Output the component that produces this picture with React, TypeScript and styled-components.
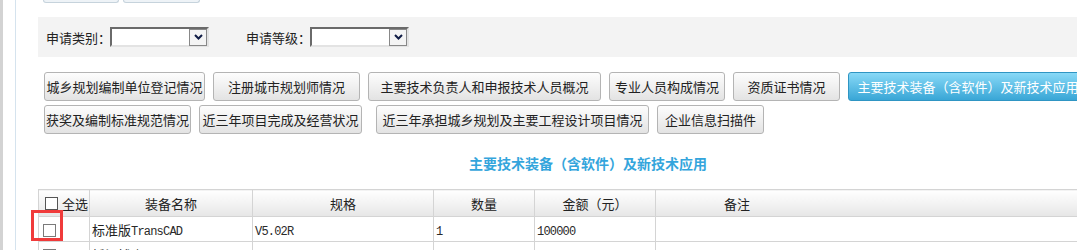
import * as React from "react";
import styled, { createGlobalStyle } from "styled-components";

const GlobalStyle = createGlobalStyle`
  html, body {
    margin: 0;
    padding: 0;
    background: #fff;
    overflow: hidden;
  }
  body {
    font-family: "Noto Sans CJK SC", "Liberation Sans", sans-serif;
    font-size: 13px;
    color: #222;
  }
`;

const Page = styled.div`
  display: flex;
  width: 1140px;
  height: 250px;
`;

const Gutter = styled.div`
  flex: none;
  width: 16px;
  box-sizing: border-box;
  border-left: 3px solid #d3d3d3;
  border-right: 1px solid #d5e3ee;
`;

const Content = styled.main`
  flex: none;
  width: 1100px;
  padding-left: 22px;
`;

const TabRow = styled.div`
  display: flex;
  gap: 4px;
  height: 3px;
  margin-left: 5px;
`;

const TabStub = styled.div<{ $w: number }>`
  width: ${(p) => p.$w}px;
  height: 3px;
  box-sizing: border-box;
  border: 1px solid #c6d3dc;
  border-top: none;
  border-radius: 0 0 3px 3px;
  background: #eef3f7;
`;

const FilterBar = styled.div`
  display: flex;
  align-items: center;
  height: 40px;
  margin-top: 14px;
  padding-left: 8px;
  background: #f3f3f3;
`;

const Field = styled.div`
  display: flex;
  align-items: center;
  & + & {
    margin-left: 37px;
  }
`;

const Label = styled.span`
  width: 64px;
  font-size: 13px;
  white-space: nowrap;
`;

const SelectBox = styled.div`
  display: flex;
  justify-content: flex-end;
  align-items: center;
  width: 99px;
  height: 20px;
  box-sizing: border-box;
  border: 2px solid;
  border-color: #6a6a6a #e3e3e3 #e3e3e3 #6a6a6a;
  background: #fff;
`;

const SelectArrow = styled.div`
  display: flex;
  align-items: center;
  justify-content: center;
  width: 18px;
  height: 17px;
  box-sizing: border-box;
  border: 1px solid #888;
  background: #f4f4f4;
`;

const ButtonArea = styled.div`
  display: flex;
  flex-direction: column;
  gap: 4px;
  margin-top: 15px;
  padding-left: 6px;
`;

const ButtonRow = styled.div`
  display: flex;
  gap: 8px;
`;

const TabButton = styled.button<{ $w: number; $lead?: number; $active?: boolean }>`
  flex: none;
  display: flex;
  align-items: center;
  justify-content: center;
  width: ${(p) => p.$w}px;
  height: 29px;
  margin-left: ${(p) => p.$lead ?? 0}px;
  padding: 0;
  box-sizing: border-box;
  border: 1px solid ${(p) => (p.$active ? "#2f95c3" : "#b4b4b4")};
  border-radius: 3px;
  background: ${(p) =>
    p.$active
      ? "linear-gradient(#88d9f7, #39a6d6)"
      : "linear-gradient(#fdfdfd, #e3e3e3)"};
  color: ${(p) => (p.$active ? "#fff" : "#222")};
  font-family: "Noto Sans CJK SC", sans-serif;
  font-size: 13px;
  white-space: nowrap;
  cursor: pointer;
`;

const Title = styled.h2`
  margin: 19px 0 0;
  height: 20px;
  line-height: 20px;
  text-align: center;
  font-size: 14px;
  font-weight: bold;
  color: #34a5dc;
`;

const TableWrap = styled.div`
  position: relative;
  margin-top: 16px;
`;

const Grid = styled.table`
  width: 1100px;
  table-layout: fixed;
  border-collapse: collapse;
`;

const Th = styled.th<{ $align?: string; $pad?: number }>`
  height: 26px;
  padding: 0 0 0 ${(p) => p.$pad ?? 0}px;
  border: 1px solid #d4d4d4;
  background: linear-gradient(#ffffff, #e6e6e6);
  font-weight: normal;
  font-size: 13px;
  color: #222;
  text-align: ${(p) => p.$align ?? "center"};
  white-space: nowrap;
`;

const Td = styled.td<{ $pad?: number }>`
  height: 24px;
  padding: 0 0 0 ${(p) => p.$pad ?? 2}px;
  border: 1px solid #d4d4d4;
  font-size: 13px;
  color: #222;
  white-space: nowrap;
`;

const Mono = styled.span`
  font-family: "Liberation Mono", monospace;
  font-size: 12px;
  letter-spacing: -0.8px;
  color: #2a2a2a;
`;

const Check = styled.span<{ $dark?: boolean }>`
  display: inline-block;
  width: 13px;
  height: 13px;
  box-sizing: border-box;
  border: 1px solid ${(p) => (p.$dark ? "#555" : "#7a7a7a")};
  background: #fff;
  vertical-align: middle;
`;

const CheckLabel = styled.span`
  margin-left: 4px;
  vertical-align: middle;
`;

const Highlight = styled.div`
  position: absolute;
  left: -7px;
  top: 21px;
  width: 32px;
  height: 31px;
  box-sizing: border-box;
  border: 3px solid #f03b3b;
  pointer-events: none;
`;

const rowOne = [
  { label: "城乡规划编制单位登记情况", w: 161 },
  { label: "注册城市规划师情况", w: 147 },
  { label: "主要技术负责人和申报技术人员概况", w: 233 },
  { label: "专业人员构成情况", w: 116 },
  { label: "资质证书情况", w: 107 },
  { label: "主要技术装备（含软件）及新技术应用", w: 240, active: true },
];

const rowTwo = [
  { label: "获奖及编制标准规范情况", w: 147 },
  { label: "近三年项目完成及经营状况", w: 163 },
  { label: "近三年承担城乡规划及主要工程设计项目情况", w: 273, lead: 6 },
  { label: "企业信息扫描件", w: 107 },
];

const equipment = [
  { name: "标准版", latin: "TransCAD", spec: "V5.02R", qty: "1", amount: "100000" },
  { name: "桥梁博士", latin: "", spec: "V3.0", qty: "1", amount: "200000" },
];

const Chevron = () => (
  <svg width="9" height="6" viewBox="0 0 9 6">
    <polyline points="1,1 4.5,4.5 8,1" fill="none" stroke="#101c45" strokeWidth="2" />
  </svg>
);

const Select = () => (
  <SelectBox>
    <SelectArrow>
      <Chevron />
    </SelectArrow>
  </SelectBox>
);

export default function App() {
  return (
    <>
      <GlobalStyle />
      <Page>
        <Gutter />
        <Content>
          <TabRow>
            <TabStub $w={76} />
            <TabStub $w={77} />
          </TabRow>

          <FilterBar>
            <Field>
              <Label>申请类别：</Label>
              <Select />
            </Field>
            <Field>
              <Label>申请等级：</Label>
              <Select />
            </Field>
          </FilterBar>

          <ButtonArea>
            <ButtonRow>
              {rowOne.map((b) => (
                <TabButton key={b.label} $w={b.w} $active={b.active}>
                  {b.label}
                </TabButton>
              ))}
            </ButtonRow>
            <ButtonRow>
              {rowTwo.map((b) => (
                <TabButton key={b.label} $w={b.w} $lead={b.lead}>
                  {b.label}
                </TabButton>
              ))}
            </ButtonRow>
          </ButtonArea>

          <Title>主要技术装备（含软件）及新技术应用</Title>

          <TableWrap>
            <Grid>
              <colgroup>
                <col style={{ width: 51 }} />
                <col style={{ width: 163 }} />
                <col style={{ width: 181 }} />
                <col style={{ width: 101 }} />
                <col style={{ width: 121 }} />
                <col />
              </colgroup>
              <thead>
                <tr>
                  <Th $align="left" $pad={6}>
                    <Check $dark />
                    <CheckLabel>全选</CheckLabel>
                  </Th>
                  <Th>装备名称</Th>
                  <Th>规格</Th>
                  <Th>数量</Th>
                  <Th>金额（元）</Th>
                  <Th $align="left" $pad={68}>备注</Th>
                </tr>
              </thead>
              <tbody>
                {equipment.map((r) => (
                  <tr key={r.name}>
                    <Td $pad={4}>
                      <Check />
                    </Td>
                    <Td>
                      {r.name}
                      <Mono>{r.latin}</Mono>
                    </Td>
                    <Td>
                      <Mono>{r.spec}</Mono>
                    </Td>
                    <Td>
                      <Mono>{r.qty}</Mono>
                    </Td>
                    <Td>
                      <Mono>{r.amount}</Mono>
                    </Td>
                    <Td />
                  </tr>
                ))}
              </tbody>
            </Grid>
            <Highlight />
          </TableWrap>
        </Content>
      </Page>
    </>
  );
}
